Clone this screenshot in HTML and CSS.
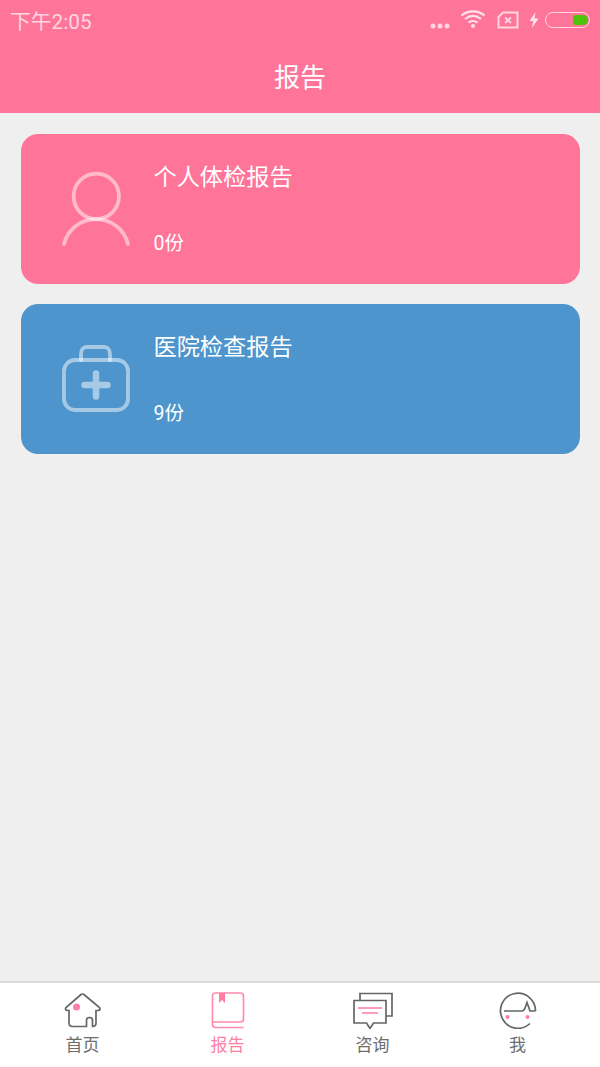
FILE: index.html
```html
<!DOCTYPE html>
<html lang="zh-CN">
<head>
    <meta charset="UTF-8">
    <title>报告</title>
    <link rel="stylesheet" href="styles.css">
</head>
<body>
<div class="app">
    <header class="top">
        <div class="status">
            <span class="time">下午2:05</span>
            <div class="status-icons">
                <svg class="ic-dots" width="20" height="6" viewBox="0 0 20 6"><circle cx="3" cy="3" r="2.500"/><circle cx="10" cy="3" r="2.500"/><circle cx="17" cy="3" r="2.500"/></svg>
                <svg class="ic-wifi" width="26" height="20" viewBox="0 0 26 20"><path d="M1.500 6.500C8 1 18 1 24.500 6.500M5 10C10 6 16 6 21 10M8.500 13.500C11.500 11.500 14.500 11.500 17.500 13.500"/><circle cx="13" cy="17" r="2"/></svg>
                <svg class="ic-sim" width="22" height="18" viewBox="0 0 22 18"><path d="M6 1.500H20.500V16.500H1.500V6ZM8 6.500L14 12M14 6.500L8 12"/></svg>
                <svg class="ic-bolt" width="10" height="16" viewBox="0 0 10 16"><path d="M6.500 0L0.500 9H4.200L3 16L9.500 6.500H5.500Z"/></svg>
                <div class="battery"><span class="battery-level"></span></div>
            </div>
        </div>
        <h1 class="page-title">报告</h1>
    </header>

    <main class="content">
        <section class="card card-pink">
            <svg class="card-icon" width="72" height="80" viewBox="0 0 72 80">
                <circle cx="36.300" cy="28.300" r="22.700"/>
                <path d="M4 76A33 33 0 0 1 68 76"/>
            </svg>
            <div class="card-text">
                <h2 class="card-title">个人体检报告</h2>
                <p class="card-count">0份</p>
            </div>
        </section>
        <section class="card card-blue">
            <svg class="card-icon" width="72" height="80" viewBox="0 0 72 80">
                <rect x="4" y="22" width="64" height="50" rx="11"/>
                <path d="M21 22V16C21 12 23 9 27 9H44C48 9 50 12 50 16V22"/>
                <path class="plus" d="M36 35.500V58.500M24.500 47H47.500"/>
            </svg>
            <div class="card-text">
                <h2 class="card-title">医院检查报告</h2>
                <p class="card-count">9份</p>
            </div>
        </section>
    </main>

    <nav class="tabbar">
        <a class="tab">
            <svg width="38" height="37" viewBox="0 0 38 37">
                <path d="M17 2.500Q18.500 1.500 20 2.500L35.500 15.500Q37 18 34 18.500H32V31Q32 34.500 28.500 34.500V28Q28.500 25.500 25.500 25.500Q22.500 25.500 22.500 28V34.500H8.500Q5 34.500 5 31V18.500H3.500Q0.500 18 2 15.500Z"/>
                <circle class="dot" cx="12.500" cy="15" r="3.500"/>
            </svg>
            <span>首页</span>
        </a>
        <a class="tab tab-active">
            <svg width="34" height="37" viewBox="0 0 34 37">
                <path d="M32.500 35.500H4.500Q1.500 35.500 1.500 32.500V4Q1.500 1 4.500 1H29.500Q32.500 1 32.500 4V27Q32.500 30 29.500 30H1.500"/>
                <path class="dot" d="M8 1H14V11L11 8L8 11Z"/>
            </svg>
            <span>报告</span>
        </a>
        <a class="tab">
            <svg width="42" height="37" viewBox="0 0 42 37">
                <path d="M8 8V1.500H40V24H34"/>
                <path class="fill" d="M2 8.500H34V31H21.500L18 36.500L14.500 31H2Z"/>
                <path class="line" d="M6 16H30M10 21H26"/>
            </svg>
            <span>咨询</span>
        </a>
        <a class="tab">
            <svg width="38" height="37" viewBox="0 0 38 37">
                <path d="M36.500 19A17.500 17.500 0 1 0 31 31.500"/>
                <path d="M5 19H23Q25 19 26 16L28 10.500L31 19H36.500"/>
                <circle class="dot" cx="8.500" cy="25" r="2"/>
                <circle class="dot" cx="28.500" cy="25" r="2"/>
            </svg>
            <span>我</span>
        </a>
    </nav>
</div>
</body>
</html>
```

FILE: styles.css
```css
* {
    box-sizing: border-box;
}

body {
    margin: 0;
    background-color: #efefef;
    font-family: Roboto, "Noto Sans CJK SC", sans-serif;
}

.app {
    display: flex;
    flex-direction: column;
    width: 600px;
    height: 1067px;
}

/* header */
.top {
    height: 113px;
    background-color: #ff7499;
    color: #fff;
}

.status {
    display: flex;
    justify-content: space-between;
    align-items: center;
    height: 40px;
    padding: 0 10px;
}

.time {
    font-size: 20.800px;
    color: #ffd5e0;
}

.status-icons {
    display: flex;
    align-items: flex-start;
    align-self: flex-start;
}

.ic-dots {
    fill: #ffd5e0;
    margin: 23px 10px 0 0;
}

.ic-wifi {
    margin: 9px 11px 0 0;
}

.ic-wifi path {
    fill: none;
    stroke: #ffe3ea;
    stroke-width: 2.200;
}

.ic-wifi circle {
    fill: #ffe3ea;
}

.ic-sim {
    margin: 11px 10px 0 0;
}

.ic-sim path {
    fill: none;
    stroke: #ffd5e0;
    stroke-width: 2;
}

.ic-bolt {
    fill: #ffe3ea;
    margin: 12px 6px 0 0;
}

.battery {
    display: flex;
    justify-content: flex-end;
    width: 45px;
    height: 16px;
    margin-top: 12px;
    padding: 2px 1.500px;
    border: 1.500px solid #ffd5e0;
    border-radius: 8px;
}

.battery-level {
    width: 15px;
    background-color: #4cc40c;
    border-radius: 2px 5px 5px 2px;
}

.page-title {
    margin: 0;
    padding-top: 19px;
    font-size: 26px;
    font-weight: 400;
    line-height: 38px;
    text-align: center;
}

/* report cards */
.content {
    display: flex;
    flex: 1;
    flex-direction: column;
    gap: 20px;
    padding: 21px 20px 0 21px;
}

.card {
    display: flex;
    height: 150px;
    padding: 34px 0 0 39px;
    border-radius: 17px;
    color: #fff;
}

.card-pink {
    background-color: #ff7499;
    box-shadow: 0 0 1px #fff;
}

.card-blue {
    background-color: #4d95cc;
    box-shadow: 0 0 1px #fff;
}

.card-icon {
    flex-shrink: 0;
}

.card-icon circle,
.card-icon path,
.card-icon rect {
    fill: none;
    stroke: #fff;
    stroke-opacity: 0.5;
    stroke-width: 3.800;
    stroke-linecap: round;
}

.card-icon .plus {
    stroke-width: 6.500;
}

.card-text {
    display: flex;
    flex-direction: column;
    justify-content: space-between;
    height: 112px;
    margin: -19px 0 0 21.500px;
    padding-top: 7px;
}

.card-title {
    margin: 0;
    font-size: 23.200px;
    font-weight: 400;
    line-height: 42px;
}

.card-count {
    margin: 0;
    font-size: 19.500px;
    line-height: 34px;
}

/* bottom tabs */
.tabbar {
    display: flex;
    height: 86px;
    padding: 9px 10px 0;
    background-color: #fff;
    border-top: 2px solid #dcdcdc;
}

.tab {
    display: flex;
    flex: 1;
    flex-direction: column;
    align-items: center;
    gap: 4px;
    font-size: 17px;
    line-height: 24px;
    color: #6e6e6e;
}

.tab path,
.tab circle {
    fill: none;
    stroke: #666;
    stroke-width: 1.700;
}

.tab .fill {
    fill: #fff;
}

.tab .dot {
    fill: #ff7fa3;
    stroke: none;
}

.tab .line {
    stroke: #ff9db8;
    stroke-width: 2;
}

.tab-active {
    color: #ff7fa3;
}

.tab-active path {
    stroke: #ff8aaa;
}
```
